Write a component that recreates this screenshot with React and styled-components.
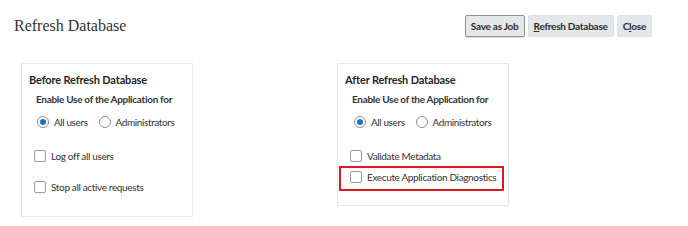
import React from "react";
import styled, { createGlobalStyle } from "styled-components";

const Global = createGlobalStyle`
  html, body { margin: 0; padding: 0; background: #fff; }
  body { font-family: Lato, "Noto Sans", sans-serif; color: #333; }
`;

const Page = styled.div`
  width: 688px;
  height: 226px;
  box-sizing: border-box;
  white-space: nowrap;
`;

const Header = styled.div`
  display: flex;
  align-items: center;
  justify-content: space-between;
  padding: 15px 36px 0 14px;
  height: 22px;
`;

const Title = styled.h1`
  margin: 0;
  font-family: "Liberation Serif", "Times New Roman", serif;
  font-weight: normal;
  font-size: 16px;
  color: #333;
`;

const Buttons = styled.div`
  display: flex;
  gap: 3px;
`;

const Button = styled.button`
  height: 22px;
  padding: 0 5px;
  font-family: Lato, "Noto Sans", sans-serif;
  font-weight: bold;
  font-size: 10px;
  letter-spacing: -0.25px;
  color: #2b2b2b;
  background: #e4e8eb;
  border: 1px solid ${(p) => (p.$primary ? "#8c9296" : "#dde0e3")};
  border-radius: 2px;
  box-shadow: ${(p) => (p.$primary ? "0 1px 1px rgba(0,0,0,0.15)" : "none")};
  u { text-decoration: underline; }
`;

const Panels = styled.div`
  display: flex;
  align-items: flex-start;
  padding: 26px 0 0 21px;
  gap: 144px;
`;

const Panel = styled.div`
  width: 172px;
  flex-shrink: 0;
  box-sizing: border-box;
  border: 1px solid #e6e8ea;
  padding: 9px 0 ${(p) => p.$pb}px 0;
  display: flex;
  flex-direction: column;
`;

const Heading = styled.div`
  font-weight: bold;
  font-size: 11px;
  line-height: 14px;
  letter-spacing: -0.15px;
  padding-left: ${(p) => p.$indent}px;
  color: #262626;
`;

const SubHeading = styled.div`
  margin-top: 5px;
  font-weight: bold;
  font-size: 10px;
  line-height: 14px;
  letter-spacing: -0.3px;
  padding-left: 14px;
  color: #333;
`;

const RadioRow = styled.div`
  margin-top: 9px;
  display: flex;
  align-items: center;
  padding-left: ${(p) => p.$indent}px;
  font-size: 10px;
  letter-spacing: -0.4px;
  line-height: 14px;
`;

const RadioItem = styled.label`
  display: flex;
  align-items: center;
  gap: 5px;
  margin-right: 11px;
  color: #333;
`;

const RadioCircle = styled.span`
  width: 10px;
  height: 10px;
  flex-shrink: 0;
  border: 1px solid #8e8e8e;
  border-radius: 50%;
  display: flex;
  align-items: center;
  justify-content: center;
  background: #fff;
  &::after {
    content: "";
    width: 6px;
    height: 6px;
    border-radius: 50%;
    background: ${(p) => (p.$checked ? "#1a73c9" : "transparent")};
  }
`;

const CheckRow = styled.label`
  display: flex;
  align-items: center;
  gap: 5px;
  margin-top: ${(p) => p.$mt}px;
  padding-left: 12px;
  font-size: 10px;
  letter-spacing: -0.35px;
  line-height: 14px;
  color: #333;
`;

const Box = styled.span`
  width: 10px;
  height: 10px;
  flex-shrink: 0;
  border: 1px solid #9a9a9a;
  border-radius: 2px;
  background: #fff;
`;

const Highlight = styled.div`
  margin: 3px 4px 0 1px;
  border: 2px solid #e3161e;
  padding: 2px 0 5px 0;
  & > label {
    margin-top: 0;
    padding-left: 9px;
  }
`;

const Radios = ({ indent }) => (
  <RadioRow $indent={indent}>
    <RadioItem>
      <RadioCircle $checked />
      All users
    </RadioItem>
    <RadioItem>
      <RadioCircle />
      Administrators
    </RadioItem>
  </RadioRow>
);

export default function App() {
  return (
    <Page>
      <Global />
      <Header>
        <Title>Refresh Database</Title>
        <Buttons>
          <Button $primary>Save as Job</Button>
          <Button>
            <u>R</u>efresh Database
          </Button>
          <Button>
            C<u>l</u>ose
          </Button>
        </Buttons>
      </Header>
      <Panels>
        <Panel $pb={22}>
          <Heading $indent={7}>Before Refresh Database</Heading>
          <SubHeading>Enable Use of the Application for</SubHeading>
          <Radios indent={15} />
          <CheckRow $mt={20}>
            <Box />
            Log off all users
          </CheckRow>
          <CheckRow $mt={17}>
            <Box />
            Stop all active requests
          </CheckRow>
        </Panel>
        <Panel $pb={14}>
          <Heading $indent={7}>After Refresh Database</Heading>
          <SubHeading>Enable Use of the Application for</SubHeading>
          <Radios indent={16} />
          <CheckRow $mt={20}>
            <Box />
            Validate Metadata
          </CheckRow>
          <Highlight>
            <CheckRow $mt={0}>
              <Box />
              Execute Application Diagnostics
            </CheckRow>
          </Highlight>
        </Panel>
      </Panels>
    </Page>
  );
}
